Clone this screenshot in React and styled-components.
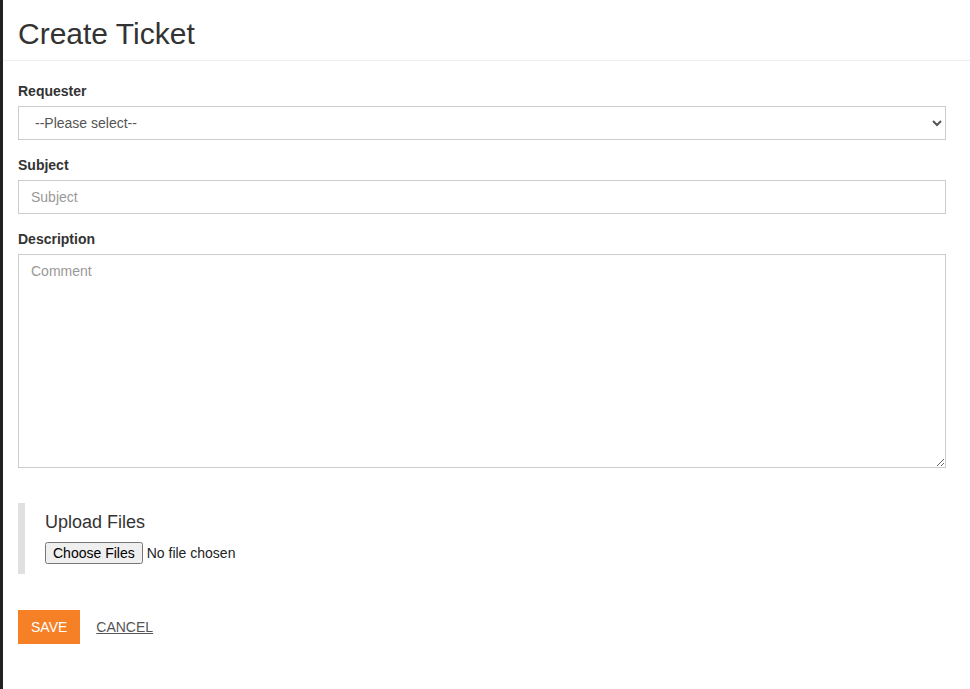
import React from "react";
import styled, { createGlobalStyle } from "styled-components";

const Global = createGlobalStyle`
  html, body { margin: 0; padding: 0; background: #fff; }
  body { font-family: "Liberation Sans", Arial, sans-serif; font-size: 14px; color: #333; }
  * { box-sizing: border-box; }
`;

const Page = styled.div`
  display: flex;
  min-height: 689px;
`;

const SideBar = styled.div`
  width: 3px;
  flex: none;
  background: #222;
`;

const Main = styled.div`
  flex: 1;
  min-width: 0;
`;

const Header = styled.div`
  padding: 17px 18px 10px 15px;
  border-bottom: 1px solid #eee;
`;

const Title = styled.h1`
  margin: 0;
  font-size: 30px;
  line-height: 33px;
  font-weight: 400;
  color: #333;
`;

const Form = styled.form`
  padding: 20px 24px 0 15px;
`;

const Group = styled.div`
  display: flex;
  flex-direction: column;
  margin-bottom: 15px;
`;

const Label = styled.label`
  font-weight: 700;
  font-size: 14px;
  line-height: 20px;
  margin-bottom: 5px;
  color: #333;
`;

const fieldCss = `
  width: 100%;
  border: 1px solid #ccc;
  background: #fff;
  font-family: "Liberation Sans", Arial, sans-serif;
  font-size: 14px;
  color: #555;
  padding: 6px 12px;
  outline: none;
  border-radius: 0;
  &::placeholder { color: #999; }
`;

const Select = styled.select`
  ${fieldCss}
  height: 34px;
  padding: 6px 8px 6px 12px;
`;

const Input = styled.input`
  ${fieldCss}
  height: 34px;
`;

const TextArea = styled.textarea`
  ${fieldCss}
  height: 214px;
  display: block;
  resize: vertical;
  padding-top: 8px;
`;

const Upload = styled.div`
  margin-top: 35px;
  border-left: 7px solid #e0e0e0;
  padding: 9px 20px 10px 20px;
`;

const UploadTitle = styled.h4`
  margin: 0 0 10px;
  font-size: 18px;
  line-height: 20px;
  font-weight: 400;
  color: #333;
`;

const FileInput = styled.input`
  font-family: "Liberation Sans", Arial, sans-serif;
  font-size: 14px;
  color: #222;
  display: block;
`;

const Actions = styled.div`
  display: flex;
  align-items: center;
  gap: 16px;
  margin-top: 36px;
`;

const SaveButton = styled.button`
  background: #f68026;
  color: #fff;
  border: none;
  height: 34px;
  padding: 0 13px;
  font-family: "Liberation Sans", Arial, sans-serif;
  font-size: 14px;
  text-transform: uppercase;
  cursor: pointer;
`;

const CancelLink = styled.a`
  color: #555;
  font-size: 14px;
  text-decoration: underline;
  text-transform: uppercase;
  cursor: pointer;
`;

export default function App() {
  return (
    <>
      <Global />
      <Page>
        <SideBar />
        <Main>
          <Header>
            <Title>Create Ticket</Title>
          </Header>
          <Form onSubmit={(e) => e.preventDefault()}>
            <Group>
              <Label>Requester</Label>
              <Select defaultValue="">
                <option value="">--Please select--</option>
              </Select>
            </Group>
            <Group>
              <Label>Subject</Label>
              <Input placeholder="Subject" />
            </Group>
            <Group>
              <Label>Description</Label>
              <TextArea placeholder="Comment" />
            </Group>
            <Upload>
              <UploadTitle>Upload Files</UploadTitle>
              <FileInput type="file" multiple />
            </Upload>
            <Actions>
              <SaveButton type="submit">Save</SaveButton>
              <CancelLink>Cancel</CancelLink>
            </Actions>
          </Form>
        </Main>
      </Page>
    </>
  );
}
